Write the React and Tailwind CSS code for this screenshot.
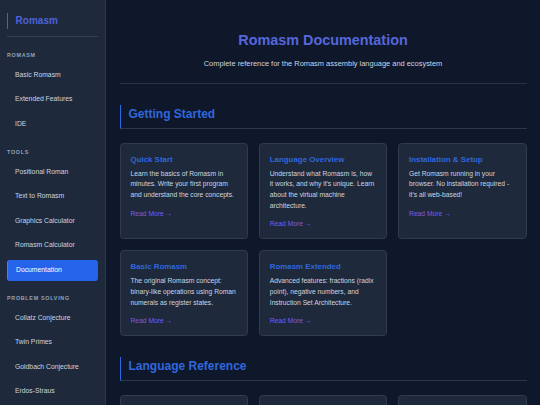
import React from 'react';

const navGroups = [
  { label: 'Romasm', items: ['Basic Romasm', 'Extended Features', 'IDE'] },
  {
    label: 'Tools',
    items: ['Positional Roman', 'Text to Romasm', 'Graphics Calculator', 'Romasm Calculator', 'Documentation'],
  },
  {
    label: 'Problem Solving',
    items: ['Collatz Conjecture', 'Twin Primes', 'Goldbach Conjecture', 'Erdos-Straus', 'Riemann Hypothesis'],
  },
];

const sections = [
  {
    title: 'Getting Started',
    cards: [
      {
        title: 'Quick Start',
        text: 'Learn the basics of Romasm in minutes. Write your first program and understand the core concepts.',
      },
      {
        title: 'Language Overview',
        text: "Understand what Romasm is, how it works, and why it's unique. Learn about the virtual machine architecture.",
      },
      {
        title: 'Installation & Setup',
        text: "Get Romasm running in your browser. No installation required - it's all web-based!",
      },
      {
        title: 'Basic Romasm',
        text: 'The original Romasm concept: binary-like operations using Roman numerals as register states.',
      },
      {
        title: 'Romasm Extended',
        text: 'Advanced features: fractions (radix point), negative numbers, and Instruction Set Architecture.',
      },
    ],
  },
  {
    title: 'Language Reference',
    cards: [
      { title: 'Instruction Set', text: 'Complete list of every Romasm instruction with syntax and examples.' },
      { title: 'Registers', text: 'How registers work and how values are stored as Roman numerals.' },
      { title: 'Syntax Guide', text: 'Labels, comments, operands and the structure of a Romasm program.' },
    ],
  },
];

function Sidebar() {
  return (
    <aside className="w-[106px] shrink-0 h-full overflow-hidden border-r border-[#2c3748] bg-[#1e293b] px-[7px] pt-[13px]">
      <div className="border-b border-[#334155] pb-[7px]">
        <div className="border-l-[1.4px] border-[#3b63e0] pl-[7.6px] text-[10px] leading-[16px] font-bold text-[#4c63d8]">
          Romasm
        </div>
      </div>
      <nav className="flex flex-col pt-[4px]">
        {navGroups.map((group) => (
          <div key={group.label} className="mt-[10px] flex flex-col">
            <div className="h-[8px] leading-[8px] mb-[5.5px] text-[5.4px] font-bold uppercase tracking-[0.7px] text-[#94a3b8]">
              {group.label}
            </div>
            {group.items.map((item) => {
              const active = item === 'Documentation';
              return (
                <div
                  key={item}
                  className={
                    active
                      ? 'h-[21px] shrink-0 mb-[3.5px] flex items-center pl-[8px] rounded-[3px] border-l-[1.4px] border-[#8b5cf6] bg-[#2563eb] text-[6.8px] text-white'
                      : 'h-[21px] shrink-0 mb-[3.5px] flex items-center pl-[8px] text-[6.8px] text-[#cbd5e1]'
                  }
                >
                  {item}
                </div>
              );
            })}
          </div>
        ))}
      </nav>
    </aside>
  );
}

function DocCard({ title, text }) {
  return (
    <div className="rounded-[3.6px] border border-[#2f3b4e] bg-[#1e293b] p-[10px]">
      <h3 className="text-[7.9px] leading-[11px] font-bold text-[#2f67dc] mb-[4px]">{title}</h3>
      <p className="text-[6.72px] leading-[10.8px] text-[#cbd5e1]">{text}</p>
      <div className="mt-[7.8px] text-[6.72px] leading-[9px] text-[#7c5ce6]">Read More →</div>
    </div>
  );
}

export default function App() {
  return (
    <div className="flex h-screen w-full overflow-hidden bg-[#0f172a]" style={{ fontFamily: '"Liberation Sans", Arial, sans-serif' }}>
      <Sidebar />
      <main className="flex-1 h-full overflow-hidden px-[13.5px]">
        <header className="pt-[32px] pb-[15.5px] border-b border-[#283244] text-center">
          <h1 className="text-[14.4px] leading-[17px] font-bold text-[#5567da]">Romasm Documentation</h1>
          <p className="mt-[9.5px] text-[7.45px] leading-[9px] text-[#cbd5e1]">
            Complete reference for the Romasm assembly language and ecosystem
          </p>
        </header>
        {sections.map((section) => (
          <section key={section.title} className="mt-[20.5px]">
            <h2 className="border-l-[1.4px] border-b border-l-[#2f67dc] border-b-[#2c3748] pl-[8px] pt-[2px] pb-[7px] text-[12px] leading-[14px] font-bold text-[#2f67dc]">
              {section.title}
            </h2>
            <div className="mt-[14px] grid grid-cols-3 gap-[10.8px]">
              {section.cards.map((card) => (
                <DocCard key={card.title} {...card} />
              ))}
            </div>
          </section>
        ))}
      </main>
    </div>
  );
}
